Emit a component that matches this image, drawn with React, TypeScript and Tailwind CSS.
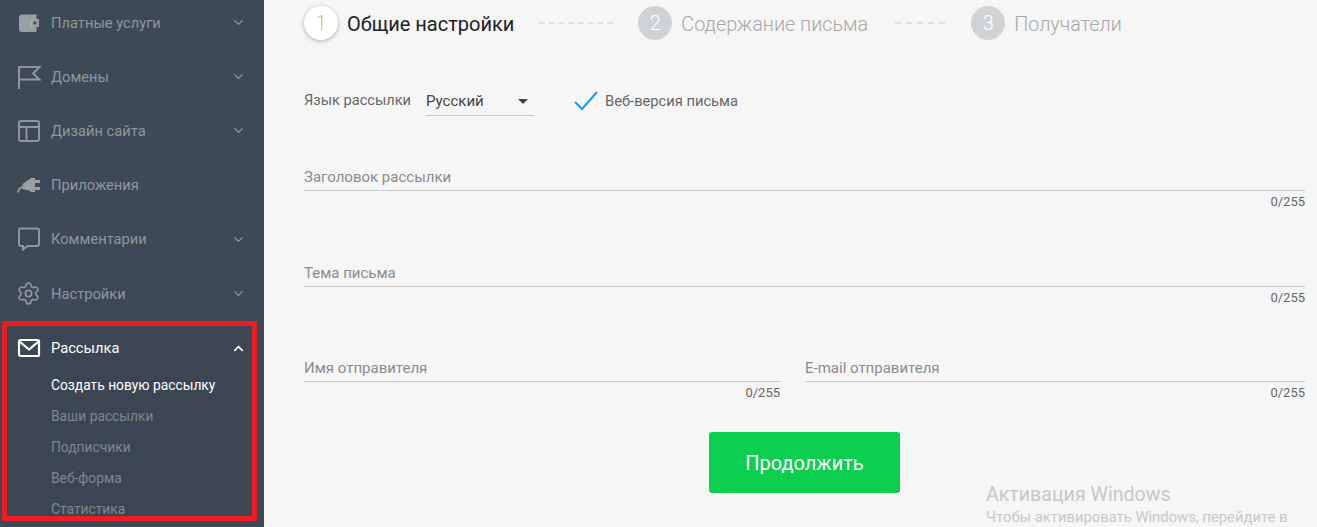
import { ChevronDown, ChevronUp, Settings } from "lucide-react";
import type { ReactNode } from "react";

const WalletIcon = () => (
  <svg width="24" height="24" viewBox="0 0 24 24" fill="none">
    <path d="M2 6 C2 4.5 3 3.5 4.5 3.5 H19.5 V8 H14 V16 H19.5 V21 H4.5 C3 21 2 20 2 18.5 Z" fill="#9a9fa4" />
    <rect x="15" y="8" width="7" height="8" fill="#9a9fa4" />
    <rect x="14" y="8" width="1.2" height="8" fill="#aeb2b6" />
    <rect x="16.5" y="10.5" width="2.8" height="2.8" fill="#3d4955" />
  </svg>
);

const FlagIcon = () => (
  <svg width="24" height="24" viewBox="0 0 24 24" fill="none" stroke="#8f969c" strokeWidth="2">
    <path d="M2 24 V2 H22.5 L16 8.5 L22.5 14.5 H2" />
  </svg>
);

const LayoutIcon = () => (
  <svg width="24" height="24" viewBox="0 0 24 24" fill="none" stroke="#8f969c" strokeWidth="2">
    <rect x="2" y="2" width="20" height="20" rx="2" />
    <path d="M2 8 H22 M9.5 8 V22" />
  </svg>
);

const PlugIcon = () => (
  <svg width="24" height="24" viewBox="0 0 24 24" fill="none">
    <path d="M1 19.5 C1.5 16.5 3 14.5 6 14" stroke="#8f969c" strokeWidth="2" />
    <path d="M5.5 11 L12 6.5 L14 5 H18 V19 H14 L12 17.5 L5.5 16 Z" fill="#9a9fa4" />
    <rect x="18" y="7" width="5" height="3" fill="#9a9fa4" />
    <rect x="18" y="14" width="5" height="3" fill="#9a9fa4" />
  </svg>
);

const CommentIcon = () => (
  <svg width="24" height="24" viewBox="0 0 24 24" fill="none" stroke="#8f969c" strokeWidth="2">
    <path d="M4 1.5 H20 C21.2 1.5 22 2.3 22 3.5 V17 C22 18.2 21.2 19 20 19 H10.5 L6 22.5 V19 H4 C2.8 19 2 18.2 2 17 V3.5 C2 2.3 2.8 1.5 4 1.5 Z" />
  </svg>
);

const MailIcon = () => (
  <svg width="24" height="24" viewBox="0 0 24 24" fill="none" stroke="#ffffff" strokeWidth="2.2">
    <rect x="2" y="4" width="20" height="16" rx="1.5" />
    <path d="M2.5 5.5 L12 13.5 L21.5 5.5" />
  </svg>
);

const NavRow = ({ icon, label, chevron = true }: { icon: ReactNode; label: string; chevron?: boolean }) => (
  <div className="flex h-[54.2px] shrink-0 items-center pl-[17px] pr-[18px] text-[14.7px] text-[#8f969c]">
    <span className="flex w-[34px] shrink-0 items-center">{icon}</span>
    <span className="flex-1">{label}</span>
    {chevron && <ChevronDown size={15} strokeWidth={2} />}
  </div>
);

const Field = ({ label, className }: { label: string; className: string }) => (
  <div className={className}>
    <div className="border-b border-[#c9c9c9] pb-[3px] text-[15px] leading-[19px] text-[#8c8c8c]">{label}</div>
    <div className="mt-[3px] text-right text-[13px] leading-[16px] text-[#666]">0/255</div>
  </div>
);

const Step = ({ n, label, active }: { n: number; label: string; active?: boolean }) => (
  <div className="flex items-center">
    {active ? (
      <div className="flex h-[34px] w-[34px] items-center justify-center rounded-full bg-white text-[20px] font-light shadow-[0_1px_4px_rgba(0,0,0,0.3)]">
        <span className="bg-gradient-to-r from-[#e6dc40] to-[#1fd060] bg-clip-text text-transparent">{n}</span>
      </div>
    ) : (
      <div className="flex h-[34px] w-[34px] items-center justify-center rounded-full bg-[#cfd3d6] text-[20px] font-light text-white">
        {n}
      </div>
    )}
    <span className={active ? "ml-[9px] pt-[1px] text-[20px] text-[#222]" : "ml-[9px] pt-[3px] text-[19.8px] font-light text-[#a8a8a8]"}>{label}</span>
  </div>
);

export default function App() {
  return (
    <div className="relative flex h-[527px] w-[1317px] overflow-hidden bg-[#f6f6f6] font-['Roboto',sans-serif]">
      {/* Sidebar */}
      <aside className="flex w-[264px] shrink-0 flex-col bg-[#3d4955]">
        <div className="-mt-[4.5px] mb-[0.5px]">
          <NavRow icon={<WalletIcon />} label="Платные услуги" />
          <NavRow icon={<FlagIcon />} label="Домены" />
          <NavRow icon={<LayoutIcon />} label="Дизайн сайта" />
          <NavRow icon={<PlugIcon />} label="Приложения" chevron={false} />
          <NavRow icon={<CommentIcon />} label="Комментарии" />
          <NavRow icon={<Settings size={25} strokeWidth={1.6} className="-ml-[1px]" />} label="Настройки" />
        </div>
        <div className="ml-[2px] h-[200px] w-[255px] border-[5px] border-[#ed1c24] bg-[#3b4652]">
          <div className="flex h-[44px] items-center pl-[10px] pr-[6px] text-[14.7px] text-white">
            <span className="flex w-[34px] items-center">
              <MailIcon />
            </span>
            <span className="flex-1">Рассылка</span>
            <ChevronUp size={15} strokeWidth={2.8} />
          </div>
          <ul className="pl-[44px] text-[13.8px] text-[#7f868c]">
            <li className="flex h-[31px] items-center text-white">Создать новую рассылку</li>
            <li className="flex h-[31px] items-center">Ваши рассылки</li>
            <li className="flex h-[31px] items-center">Подписчики</li>
            <li className="flex h-[31px] items-center">Веб-форма</li>
            <li className="flex h-[31px] items-center">Статистика</li>
          </ul>
        </div>
      </aside>

      {/* Main form */}
      <main className="flex flex-1 flex-col pl-[40px] pr-[12px] pt-[6px]">
        <div className="flex items-center">
          <Step n={1} label="Общие настройки" active />
          <div className="mx-[25px] w-[74px] border-t-2 border-dashed border-[#e0e0e0]" />
          <Step n={2} label="Содержание письма" />
          <div className="ml-[27px] mr-[26px] w-[50px] border-t-2 border-dashed border-[#e0e0e0]" />
          <Step n={3} label="Получатели" />
        </div>

        <div className="mt-[43px] flex h-[36px] items-center text-[14.6px] text-[#666]">
          <span>Язык рассылки</span>
          <div className="ml-[15px] flex h-[29px] w-[108px] items-center justify-between border-b border-[#c9c9c9] pr-[6px] pt-[2px] text-[15px] text-[#444]">
            <span>Русский</span>
            <span className="h-0 w-0 border-x-[5px] border-t-[5px] border-x-transparent border-t-[#444]" />
          </div>
          <svg width="24" height="20" viewBox="0 0 24 20" fill="none" stroke="#2196f3" strokeWidth="2" className="ml-[40px]">
            <path d="M1 11 L8 18 L23 1" />
          </svg>
          <span className="ml-[7px] text-[14.7px]">Веб-версия письма</span>
        </div>

        <Field label="Заголовок рассылки" className="mt-[49px]" />
        <Field label="Тема письма" className="mt-[54px]" />
        <div className="mt-[53px] flex gap-[25px]">
          <Field label="Имя отправителя" className="w-[476px]" />
          <Field label="E-mail отправителя" className="flex-1" />
        </div>

        <button className="mx-auto mt-[31px] ml-[405px] h-[61px] w-[191px] rounded-[3px] bg-[#0dcf4f] text-[20px] text-white">
          Продолжить
        </button>
      </main>

      {/* Windows activation watermark */}
      <div className="absolute left-[986px] top-[483px] text-[#c8c8c8]">
        <div className="text-[19.6px] leading-[24px]">Активация Windows</div>
        <div className="mt-[1px] whitespace-nowrap text-[14.8px] leading-[18px]">Чтобы активировать Windows, перейдите в</div>
      </div>
    </div>
  );
}
